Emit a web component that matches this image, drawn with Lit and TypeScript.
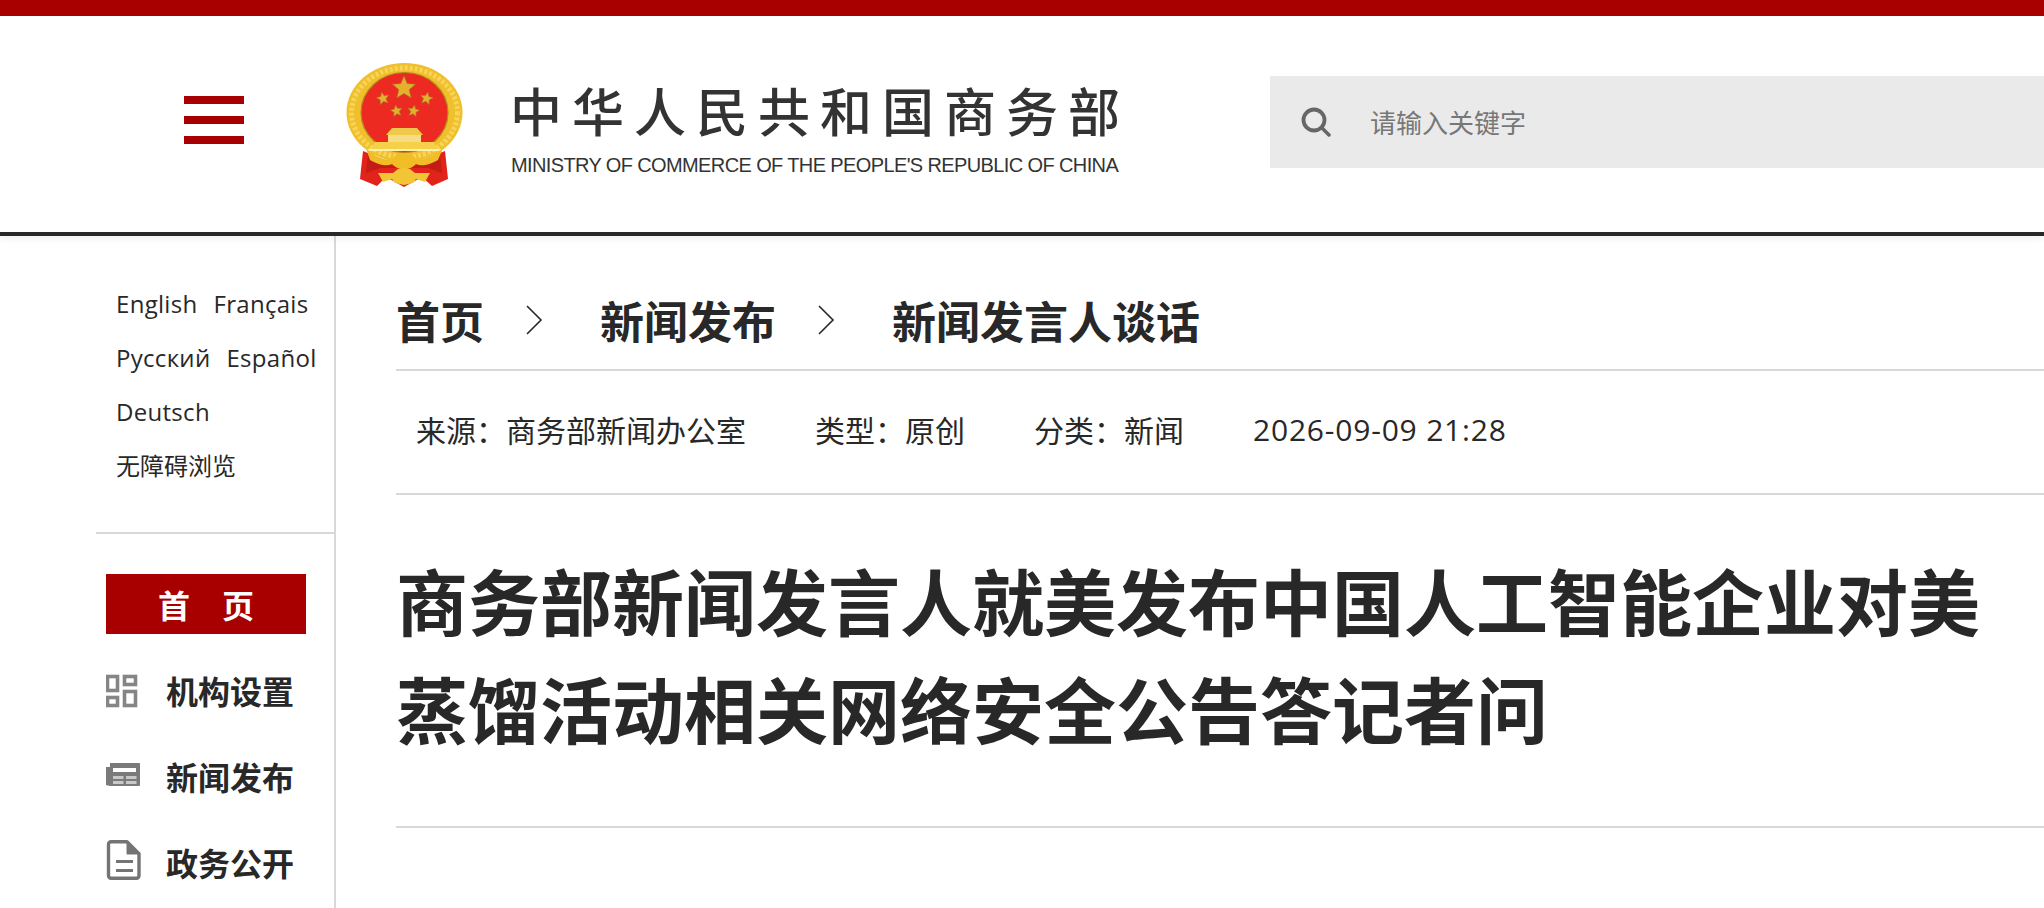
import { LitElement, html, css, svg } from "lit";
import { customElement } from "lit/decorators.js";

function star(cx: number, cy: number, r: number, rot = 0) {
  const pts: string[] = [];
  for (let i = 0; i < 10; i++) {
    const rad = i % 2 === 0 ? r : r * 0.45;
    const a = ((-90 + rot + i * 36) * Math.PI) / 180;
    pts.push(`${(cx + rad * Math.cos(a)).toFixed(2)},${(cy + rad * Math.sin(a)).toFixed(2)}`);
  }
  return svg`<polygon points=${pts.join(" ")} fill="#e3b12e" stroke="#a9822a" stroke-width=".6"/>`;
}

@customElement("app-root")
export class AppRoot extends LitElement {
  static styles = css`
    :host { display: block; height: 908px; overflow: hidden; background: #fff; font-family: "Open Sans", "Noto Sans CJK SC", sans-serif; color: #282828; }
    .topbar { height: 16px; background: #a80000; }
    .header { height: 216px; display: flex; align-items: flex-start; border-bottom: 4px solid #282828; box-shadow: 0 2px 8px rgba(0,0,0,.07); position: relative; }
    .burger { margin: 80px 0 0 184px; width: 60px; display: flex; flex-direction: column; gap: 12px; }
    .burger i { display: block; height: 8px; background: #a80000; }
    .emblem { margin: 24px 0 0 76px; width: 170px; height: 160px; flex: none; filter: blur(.5px); }
    .brand { margin: 60px 0 0 20px; width: 760px; flex: none; }
    .brand .cn { font-family: "Noto Sans CJK SC", sans-serif; font-weight: 500; font-size: 52px; line-height: 68px; letter-spacing: 10px; color: #333; white-space: nowrap; }
    .brand .en { font-family: "Liberation Sans", sans-serif; font-size: 20px; line-height: 22px; margin: 10px 0 0 1px; letter-spacing: -0.62px; color: #333; white-space: nowrap; }
    .search { flex: 1; margin-top: 60px; height: 92px; background: #eaeaea; display: flex; align-items: center; padding-left: 31px; gap: 39px; }
    .search svg { width: 30px; height: 30px; flex: none; filter: blur(.4px); }
    .search span { font-size: 26px; color: #777; }
    .body { display: flex; height: 672px; }
    .side { width: 238px; margin-left: 96px; border-right: 2px solid #d8d8d8; flex: none; }
    .langs { padding: 41px 0 39px 20px; border-bottom: 2px solid #d8d8d8; font-size: 24px; line-height: 54px; white-space: nowrap; letter-spacing: .3px; }
    .langs span { margin-right: 16px; display: inline-block; }
    .langs .cjk { letter-spacing: 0; }
    .nav { padding: 40px 0 0 10px; }
    .home { width: 200px; height: 60px; background: #a80000; color: #fff; font-size: 32px; font-weight: 700; display: flex; align-items: center; justify-content: center; gap: 32px; }
    .item { display: flex; align-items: center; height: 86px; font-size: 32px; font-weight: 700; }
    .item svg { width: 36px; height: 44px; margin-right: 24px; flex: none; filter: blur(.5px); }
    .home + .item { margin-top: 13px; }
    .main { flex: 1; padding-left: 60px; min-width: 0; }
    .crumb { height: 135px; display: flex; align-items: center; font-size: 44px; font-weight: 700; border-bottom: 2px solid #d8d8d8; box-sizing: border-box; white-space: nowrap; padding-top: 35px; }
    .crumb svg { width: 20px; height: 32px; margin: 0 56px 0 40px; flex: none; }
    .meta { height: 124px; display: flex; align-items: center; gap: 69px; padding: 0 0 6px 20px; font-size: 30px; border-bottom: 2px solid #d8d8d8; box-sizing: border-box; white-space: nowrap; }
    .date { letter-spacing: .8px; }
    h1 { margin: 0; padding: 53px 48px 0 0; font-size: 72px; line-height: 108px; font-weight: 700; height: 333px; box-sizing: border-box; border-bottom: 2px solid #d8d8d8; }
  `;

  render() {
    const chev = html`<svg viewBox="0 0 20 32"><path d="M3 2 L17 16 L3 30" fill="none" stroke="#282828" stroke-width="1.6"/></svg>`;
    return html`
      <div class="topbar"></div>
      <div class="header">
        <div class="burger"><i></i><i></i><i></i></div>
        <svg class="emblem" viewBox="0 0 170 160">
          <path d="M43 111 L40 139 L57 146 L66 137 L84 147 L102 137 L112 146 L128 139 L125 111 L84 128z" fill="#e2231b"/>
          <path d="M48 116 L46 133 L60 128 L108 128 L122 133 L120 116 L84 130z" fill="#c21c14"/>
          <ellipse cx="84.500" cy="72.500" rx="58" ry="49.500" fill="#f0bf2c"/>
          <ellipse cx="84.500" cy="72.500" rx="53" ry="44.500" fill="none" stroke="#f8d458" stroke-width="5" stroke-dasharray="3 2"/>
          <ellipse cx="84.500" cy="72.500" rx="43.500" ry="40" fill="#ec2a22" stroke="#b58a22" stroke-width="1.200"/>
          ${star(84, 48, 12)}${star(63, 58.500, 6.500, -12)}${star(106.500, 58.500, 6.500, 12)}${star(76.500, 71, 6, -10)}${star(93.500, 71, 6, 10)}
          <path d="M72 88h25l6 7H66z" fill="#f0c84a"/>
          <path d="M68 95h33v7H68z" fill="#f6dc84"/>
          <path d="M55 102h59l4 7H51z" fill="#f7d04a"/>
          <path d="M47 109h75v2H47z" fill="#fff0b0"/>
          <path d="M46 108 Q60 122 72 119 Q76 113 84 113 Q92 113 96 119 Q108 122 123 108 L118 120 Q104 128 96 124 Q90 130 84 128 Q78 130 72 124 Q64 128 50 120z" fill="#f1bd27"/>
          <path d="M58 133h15l5-4q6-3 12 0l5 4h15l-5 9-9-3-3 4-9 2-9-2-3-4-9 3z" fill="#f2c534"/>
        </svg>
        <div class="brand">
          <div class="cn">中华人民共和国商务部</div>
          <div class="en">MINISTRY OF COMMERCE OF THE PEOPLE'S REPUBLIC OF CHINA</div>
        </div>
        <div class="search">
          <svg viewBox="0 0 30 30"><circle cx="13" cy="13" r="10.500" fill="none" stroke="#666" stroke-width="3.800"/><path d="M21 21l7 7" stroke="#666" stroke-width="3.500" stroke-linecap="round"/></svg>
          <span>请输入关键字</span>
        </div>
      </div>
      <div class="body">
        <aside class="side">
          <div class="langs">
            <div><span>English</span><span>Français</span></div>
            <div><span>Русский</span><span>Español</span></div>
            <div>Deutsch</div>
            <div class="cjk">无障碍浏览</div>
          </div>
          <div class="nav">
            <div class="home"><span>首</span><span>页</span></div>
            <div class="item">
              <svg viewBox="0 0 36 44" fill="none" stroke="#858585" stroke-width="3.600"><rect x="1.500" y="8.500" width="10" height="14"/><rect x="18.500" y="8.500" width="11" height="8"/><rect x="1.500" y="29.500" width="10" height="8"/><rect x="18.500" y="23.500" width="11" height="14"/></svg>
              机构设置
            </div>
            <div class="item">
              <svg viewBox="0 0 36 44"><path d="M4 9h29a1 1 0 0 1 1 1v21a1 1 0 0 1-1 1H4l-4-1V13h4z" fill="#7a7a7a"/><rect x="7" y="14" width="23" height="4" fill="#fff"/><rect x="7" y="22" width="10.500" height="3" fill="#c8c8c8"/><rect x="20" y="22" width="10.500" height="3" fill="#c8c8c8"/><rect x="7" y="27" width="10.500" height="3" fill="#c8c8c8"/><rect x="20" y="27" width="10.500" height="3" fill="#c8c8c8"/></svg>
              新闻发布
            </div>
            <div class="item">
              <svg viewBox="0 0 36 44" fill="none" stroke="#747474" stroke-width="3.400"><path d="M5 1.800h16l12 12v22a2.500 2.500 0 0 1-2.500 2.500H5a2.500 2.500 0 0 1-2.500-2.500V4.300A2.500 2.500 0 0 1 5 1.800z" stroke-linejoin="round"/><path d="M21 2l12 12H21z" fill="#747474" stroke-width="1"/><path d="M10 21.500h17M10 30.500h17" stroke-width="2.800"/></svg>
              政务公开
            </div>
          </div>
        </aside>
        <main class="main">
          <div class="crumb"><span>首页</span>${chev}<span>新闻发布</span>${chev}<span>新闻发言人谈话</span></div>
          <div class="meta"><span>来源：商务部新闻办公室</span><span>类型：原创</span><span>分类：新闻</span><span class="date">2026-09-09 21:28</span></div>
          <h1>商务部新闻发言人就美发布中国人工智能企业对美蒸馏活动相关网络安全公告答记者问</h1>
        </main>
      </div>
    `;
  }
}
